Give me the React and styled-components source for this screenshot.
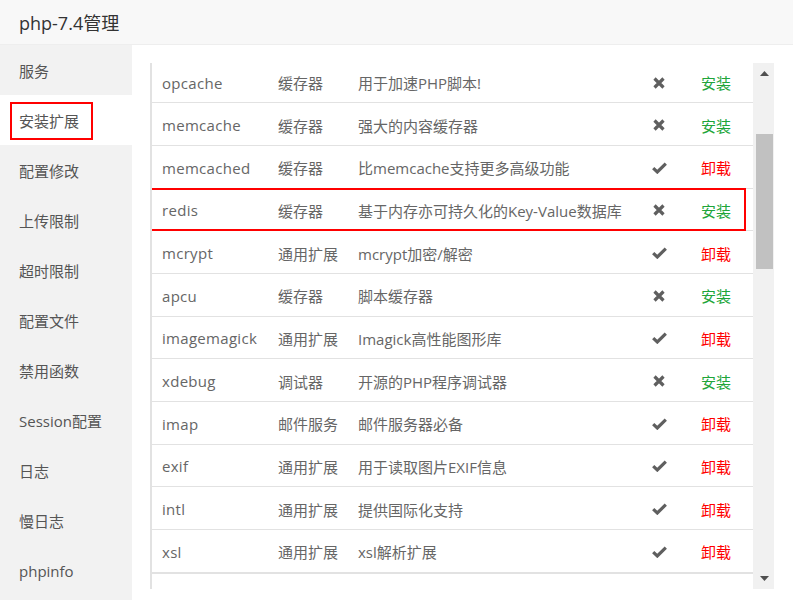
import React from "react";
import styled, { createGlobalStyle } from "styled-components";

const GlobalStyle = createGlobalStyle`
  html, body { margin: 0; padding: 0; background: #fff; }
  body { font-family: "Open Sans", "Noto Sans CJK SC", sans-serif; }
`;

const Root = styled.div`
  width: 793px;
  height: 600px;
  overflow: hidden;
  display: flex;
  flex-direction: column;
  background: #fff;
`;

const Header = styled.div`
  height: 45px;
  flex: none;
  box-sizing: border-box;
  background: #f8f8f8;
  border-bottom: 1px solid #eee;
  padding-left: 19px;
  display: flex;
  align-items: center;
  font-size: 18px;
  color: #333;
`;

const Body = styled.div`
  flex: 1;
  display: flex;
  min-height: 0;
`;

const Sidebar = styled.div`
  width: 132px;
  flex: none;
  background: #f2f2f2;
  display: flex;
  flex-direction: column;
`;

const NavItem = styled.div`
  height: 50px;
  flex: none;
  box-sizing: border-box;
  padding-top: 1px;
  display: flex;
  align-items: center;
  padding-left: 19px;
  font-size: 15px;
  color: #555;
  background: ${(p) => (p.$active ? "#fff" : "transparent")};
`;

const Marked = styled.span`
  display: inline-flex;
  align-items: center;
  height: 38px;
  box-sizing: border-box;
  border: 2px solid #f00;
  padding: 0 12px 0 7px;
  margin-left: -9px;
`;

const Main = styled.div`
  flex: 1;
  padding: 18px 19px 0 18px;
  min-width: 0;
`;

const ScrollBox = styled.div`
  height: 526px;
  display: flex;
  border-left: 2px solid #e2e2e2;
`;

const Viewport = styled.div`
  flex: 1;
  overflow: hidden;
  min-width: 0;
`;

const Table = styled.div`
  margin-top: -2.33px;
  border-bottom: 1px solid #e2e2e2;
`;

const Row = styled.div`
  position: relative;
  height: 42.67px;
  box-sizing: border-box;
  padding-top: 2px;
  border-bottom: 1px solid #e2e2e2;
  display: flex;
  align-items: center;
  font-size: 15px;
  color: #666;
  ${(p) =>
    p.$marked &&
    `
    &::after {
      content: "";
      position: absolute;
      left: -2px;
      right: 7px;
      top: -1px;
      bottom: -1px;
      border: 2px solid #f00;
      pointer-events: none;
    }
  `}
`;

const Cell = styled.div`
  box-sizing: border-box;
  width: ${(p) => p.$w}px;
  flex: ${(p) => (p.$w ? "none" : "1")};
  padding-left: ${(p) => p.$pl ?? 0}px;
  display: flex;
  align-items: center;
  justify-content: ${(p) => (p.$center ? "center" : "flex-start")};
  white-space: nowrap;
`;

const Name = styled.span`
  letter-spacing: 0.3px;
`;

const Action = styled.span`
  color: ${(p) => (p.$installed ? "#f00" : "#20a53a")};
`;

const Scrollbar = styled.div`
  width: 21px;
  flex: none;
  background: #f1f1f1;
  display: flex;
  flex-direction: column;
`;

const ArrowButton = styled.div`
  height: 21px;
  flex: none;
  display: flex;
  align-items: center;
  justify-content: center;
  padding-left: 2px;
`;

const Track = styled.div`
  flex: 1;
  padding: 50px 1px 0 3px;
`;

const Thumb = styled.div`
  height: 135px;
  background: #c1c1c1;
`;

const CrossIcon = () => (
  <svg width="12" height="12" viewBox="0 0 12 12">
    <path d="M1.5 1.5 L10.5 10.5 M10.5 1.5 L1.5 10.5" stroke="#5f5f5f" strokeWidth="3.2" fill="none" />
  </svg>
);

const CheckIcon = () => (
  <svg width="15" height="12" viewBox="0 0 15 12">
    <path d="M1.2 6.2 L5.3 10 L13.8 1.6" stroke="#5f5f5f" strokeWidth="3.2" fill="none" strokeLinejoin="miter" />
  </svg>
);

const Triangle = ({ down }) => (
  <svg width="9" height="5" viewBox="0 0 9 5">
    <path d={down ? "M0 0 L9 0 L4.5 5 Z" : "M0 5 L9 5 L4.5 0 Z"} fill="#505050" />
  </svg>
);

const navItems = [
  "服务",
  "安装扩展",
  "配置修改",
  "上传限制",
  "超时限制",
  "配置文件",
  "禁用函数",
  "Session配置",
  "日志",
  "慢日志",
  "phpinfo",
];

const rows = [
  ["opcache", "缓存器", "用于加速PHP脚本!", false],
  ["memcache", "缓存器", "强大的内容缓存器", false],
  ["memcached", "缓存器", "比memcache支持更多高级功能", true],
  ["redis", "缓存器", "基于内存亦可持久化的Key-Value数据库", false, true],
  ["mcrypt", "通用扩展", "mcrypt加密/解密", true],
  ["apcu", "缓存器", "脚本缓存器", false],
  ["imagemagick", "通用扩展", "Imagick高性能图形库", true],
  ["xdebug", "调试器", "开源的PHP程序调试器", false],
  ["imap", "邮件服务", "邮件服务器必备", true],
  ["exif", "通用扩展", "用于读取图片EXIF信息", true],
  ["intl", "通用扩展", "提供国际化支持", true],
  ["xsl", "通用扩展", "xsl解析扩展", true],
];

export default function App() {
  return (
    <Root>
      <GlobalStyle />
      <Header>php-7.4管理</Header>
      <Body>
        <Sidebar>
          {navItems.map((n, i) => (
            <NavItem key={n} $active={i === 1}>
              {i === 1 ? <Marked>{n}</Marked> : n}
            </NavItem>
          ))}
        </Sidebar>
        <Main>
          <ScrollBox>
            <Viewport>
              <Table>
                {rows.map(([name, type, desc, installed, marked]) => (
                  <Row key={name} $marked={marked}>
                    <Cell $w={115} $pl={10}>
                      <Name>{name}</Name>
                    </Cell>
                    <Cell $w={80} $pl={11}>{type}</Cell>
                    <Cell $w={283} $pl={11}>{desc}</Cell>
                    <Cell $w={58} $center>
                      {installed ? <CheckIcon /> : <CrossIcon />}
                    </Cell>
                    <Cell $pl={13}>
                      <Action $installed={installed}>{installed ? "卸载" : "安装"}</Action>
                    </Cell>
                  </Row>
                ))}
              </Table>
            </Viewport>
            <Scrollbar>
              <ArrowButton>
                <Triangle />
              </ArrowButton>
              <Track>
                <Thumb />
              </Track>
              <ArrowButton>
                <Triangle down />
              </ArrowButton>
            </Scrollbar>
          </ScrollBox>
        </Main>
      </Body>
    </Root>
  );
}
